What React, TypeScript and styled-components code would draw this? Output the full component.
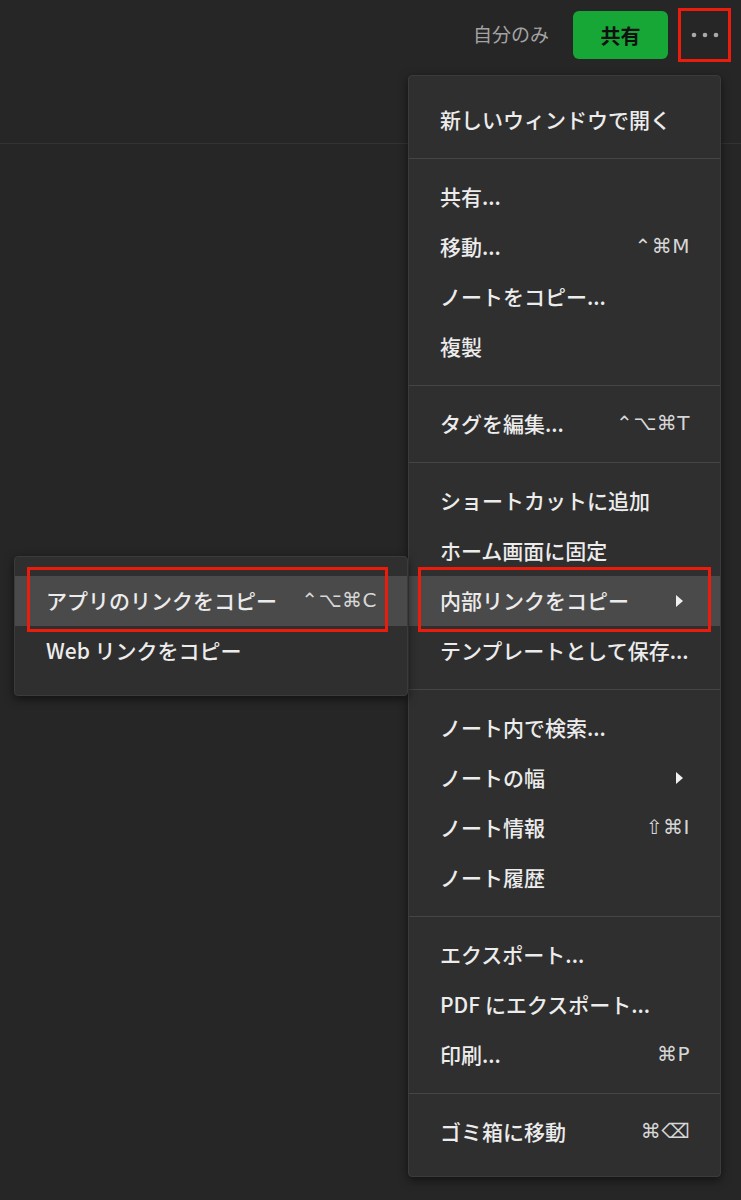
import * as React from 'react'
import styled, { createGlobalStyle } from 'styled-components'

const GlobalStyle = createGlobalStyle`
  body {
    margin: 0;
    background-color: #262626;
    font-family: "Noto Sans CJK JP", "Noto Sans", sans-serif;
  }
`

const Page = styled.div`
  position: relative;
  width: 741px;
  height: 1200px;
  overflow: hidden;
  background-color: #262626;
`

const TopBar = styled.header`
  height: 144px;
  box-sizing: border-box;
  padding: 11px 16px 0 0;
  border-bottom: 1px solid #333333;

  display: flex;
  justify-content: flex-end;
  align-items: flex-start;
`

const Visibility = styled.span`
  height: 48px;
  line-height: 46px;
  margin-right: 24px;
  font-size: 19px;
  color: #a3a3a3;
`

const ShareButton = styled.button`
  width: 95px;
  height: 48px;
  border: none;
  border-radius: 6px;
  background-color: #16a737;
  color: #111111;
  font-family: inherit;
  font-size: 20px;
  font-weight: 700;
`

const MoreButton = styled.button`
  width: 40px;
  height: 48px;
  margin-left: 17px;
  padding: 0;
  border: none;
  background: none;

  display: flex;
  align-items: center;
  justify-content: center;
`

const Menu = styled.div<{ $left: number, $top: number, $width: number }>`
  position: absolute;
  left: ${props => props.$left}px;
  top: ${props => props.$top}px;
  width: ${props => props.$width}px;
  box-sizing: border-box;
  padding: 6px 0;

  background-color: #2f2f2f;
  border: 1px solid #3b3b3b;
  border-radius: 4px;
  box-shadow: 0 3px 10px rgba(0, 0, 0, 0.55);
`

const Section = styled.div`
  padding: 13px 0;

  & + & {
    border-top: 1px solid #454545;
  }
`

const Item = styled.div<{ $active?: boolean }>`
  height: 50px;
  box-sizing: border-box;
  padding: 0 30px 3px 31px;

  display: flex;
  align-items: center;
  justify-content: space-between;

  background-color: ${props => props.$active ? '#4a4a4a' : 'transparent'};
  color: #ececec;
  font-size: 21px;
  font-weight: 500;
  white-space: nowrap;
`

const Shortcut = styled.span`
  font-family: "DejaVu Sans", sans-serif;
  font-size: 20px;
  color: #d6d6d6;
  letter-spacing: 0.5px;
`

const Arrow = styled.span`
  width: 0;
  height: 0;
  margin: 3px 7px 0 0;
  border-top: 6px solid transparent;
  border-bottom: 6px solid transparent;
  border-left: 7px solid #f0f0f0;
`

const Highlight = styled.div<{ $left: number, $top: number, $width: number, $height: number }>`
  position: absolute;
  left: ${props => props.$left}px;
  top: ${props => props.$top}px;
  width: ${props => props.$width}px;
  height: ${props => props.$height}px;
  box-sizing: border-box;
  border: 3px solid #ec1c0c;
  pointer-events: none;
`

type Entry = { label: string, shortcut?: string, submenu?: boolean, active?: boolean }

const sections: Entry[][] = [
  [{ label: '新しいウィンドウで開く' }],
  [
    { label: '共有...' },
    { label: '移動...', shortcut: '⌃⌘M' },
    { label: 'ノートをコピー...' },
    { label: '複製' }
  ],
  [{ label: 'タグを編集...', shortcut: '⌃⌥⌘T' }],
  [
    { label: 'ショートカットに追加' },
    { label: 'ホーム画面に固定' },
    { label: '内部リンクをコピー', submenu: true, active: true },
    { label: 'テンプレートとして保存...' }
  ],
  [
    { label: 'ノート内で検索...' },
    { label: 'ノートの幅', submenu: true },
    { label: 'ノート情報', shortcut: '⇧⌘I' },
    { label: 'ノート履歴' }
  ],
  [
    { label: 'エクスポート...' },
    { label: 'PDF にエクスポート...' },
    { label: '印刷...', shortcut: '⌘P' }
  ],
  [{ label: 'ゴミ箱に移動', shortcut: '⌘⌫' }]
]

const linkItems: Entry[] = [
  { label: 'アプリのリンクをコピー', shortcut: '⌃⌥⌘C', active: true },
  { label: 'Web リンクをコピー' }
]

function MenuItem ({ entry }: { entry: Entry }): React.ReactElement {
  return (
    <Item $active={entry.active}>
      <span>{entry.label}</span>
      {entry.shortcut != null && <Shortcut>{entry.shortcut}</Shortcut>}
      {entry.submenu === true && <Arrow />}
    </Item>
  )
}

function Dots (): React.ReactElement {
  return (
    <svg width='28' height='6' viewBox='0 0 28 6'>
      <circle cx='3' cy='3' r='2.3' fill='#a9a9a9' />
      <circle cx='14' cy='3' r='2.3' fill='#a9a9a9' />
      <circle cx='25' cy='3' r='2.3' fill='#a9a9a9' />
    </svg>
  )
}

export default function App (): React.ReactElement {
  return (
    <Page>
      <GlobalStyle />
      <TopBar>
        <Visibility>自分のみ</Visibility>
        <ShareButton>共有</ShareButton>
        <MoreButton title='その他'><Dots /></MoreButton>
      </TopBar>

      <Menu $left={408} $top={75} $width={313}>
        {sections.map((section, i) => (
          <Section key={i}>
            {section.map(entry => <MenuItem key={entry.label} entry={entry} />)}
          </Section>
        ))}
      </Menu>

      <Menu $left={14} $top={556} $width={394}>
        <Section>
          {linkItems.map(entry => <MenuItem key={entry.label} entry={entry} />)}
        </Section>
      </Menu>

      <Highlight $left={678} $top={8} $width={53} $height={54} />
      <Highlight $left={418} $top={567} $width={293} $height={65} />
      <Highlight $left={27} $top={567} $width={361} $height={65} />
    </Page>
  )
}
